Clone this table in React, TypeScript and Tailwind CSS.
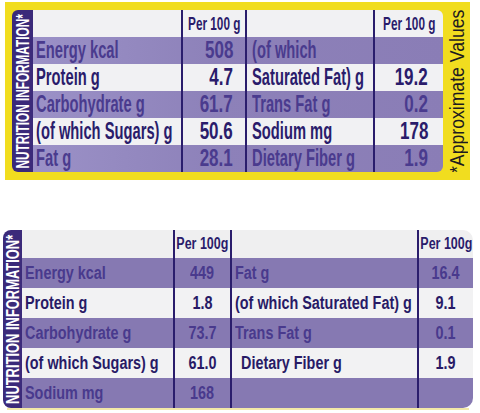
import React from "react";

const NB = "font-['Liberation_Sans',Arial,sans-serif] font-bold";

const topRows = [
  { l1: "Energy kcal", v1: "508", l2: "(of which", v2: "", p: true },
  { l1: "Protein g", v1: "4.7", l2: "Saturated Fat) g", v2: "19.2", p: false },
  { l1: "Carbohydrate g", v1: "61.7", l2: "Trans Fat g", v2: "0.2", p: true },
  { l1: "(of which Sugars) g", v1: "50.6", l2: "Sodium mg", v2: "178", p: false },
  { l1: "Fat g", v1: "28.1", l2: "Dietary Fiber g", v2: "1.9", p: true },
];

const botRows = [
  { l1: "Energy kcal", v1: "449", l2: "Fat g", v2: "16.4", p: true, ind: false },
  { l1: "Protein g", v1: "1.8", l2: "(of which Saturated Fat) g", v2: "9.1", p: false, ind: false },
  { l1: "Carbohydrate g", v1: "73.7", l2: "Trans Fat g", v2: "0.1", p: true, ind: false },
  { l1: "(of which Sugars) g", v1: "61.0", l2: "Dietary Fiber g", v2: "1.9", p: false, ind: true },
  { l1: "Sodium mg", v1: "168", l2: "", v2: "", p: true, ind: false },
];

function TopPanel() {
  return (
    <div className="ml-[5px] mt-[2px] flex h-[178px] w-[465px] bg-[#f1dd1f] pl-[7px] pt-[8px]">
      <div className="flex h-[162px] w-[431px] overflow-hidden rounded-r-[6px]">
        <div className="flex w-[21px] items-center justify-center overflow-hidden rounded-l-[6px] bg-[#3b2a7a]">
          <span className={`${NB} whitespace-nowrap text-[19px] leading-none text-white [writing-mode:vertical-rl] rotate-180 scale-y-[0.62]`}>
            NUTRITION INFORMATION*
          </span>
        </div>
        <div className={`${NB} flex w-[410px] flex-col`}>
          <div className="grid h-[27px] grid-cols-[150px_64px_128px_68px] bg-[#f1f1f3] text-[#2a1c6b]">
            <div className="border-r-2 border-[#2a1d6c]" />
            <div className="flex items-center justify-center border-r-2 border-[#2a1d6c]">
              <span className="inline-block scale-x-[0.62] whitespace-nowrap text-[19px] leading-none">Per 100 g</span>
            </div>
            <div className="border-r-2 border-[#2a1d6c]" />
            <div className="flex items-center justify-center">
              <span className="inline-block scale-x-[0.62] whitespace-nowrap text-[19px] leading-none">Per 100 g</span>
            </div>
          </div>
          {topRows.map((r, i) => (
            <div
              key={i}
              className={`grid h-[27px] grid-cols-[150px_64px_128px_68px] text-[23px] leading-none ${
                r.p
                  ? "bg-[linear-gradient(90deg,#9b91c7,#8d81b9_45%,#8a7db6)] text-[#4a3b8e]"
                  : "bg-[#f1f1f3] text-[#2a1c6b]"
              }`}
            >
              <div className="flex items-center border-r-2 border-[#2a1d6c] pl-[3px]">
                <span className="inline-block origin-left scale-x-[0.64] whitespace-nowrap">{r.l1}</span>
              </div>
              <div className="flex items-center justify-end border-r-2 border-[#2a1d6c] pr-[12px]">
                <span className="inline-block origin-right scale-x-[0.74] whitespace-nowrap">{r.v1}</span>
              </div>
              <div className="flex items-center border-r-2 border-[#2a1d6c] pl-[5px]">
                <span className="inline-block origin-left scale-x-[0.64] whitespace-nowrap">{r.l2}</span>
              </div>
              <div className="flex items-center justify-end pr-[15px]">
                <span className="inline-block origin-right scale-x-[0.74] whitespace-nowrap">{r.v2}</span>
              </div>
            </div>
          ))}
        </div>
      </div>
      <div className="flex h-[162px] w-[27px] items-center justify-center overflow-hidden">
        <span className="whitespace-nowrap font-['Liberation_Sans',Arial,sans-serif] text-[21px] leading-none text-[#1d1a1f] [writing-mode:vertical-rl] rotate-180 scale-y-[0.84]">
          *Approximate Values
        </span>
      </div>
    </div>
  );
}

function BottomPanel() {
  return (
    <div className="ml-[3px] mt-[50px] w-[470px]">
      <div className="flex h-[178px] w-[470px]">
        <div className="flex w-[19px] items-center justify-center overflow-hidden rounded-l-[8px] bg-[#3b2a7a]">
          <span className={`${NB} whitespace-nowrap text-[19px] leading-none text-white [writing-mode:vertical-rl] rotate-180 scale-y-[0.68]`}>
            NUTRITION INFORMATION*
          </span>
        </div>
        <div className={`${NB} flex w-[451px] flex-col overflow-hidden rounded-r-[10px] text-[18px] leading-none`}>
          <div className="grid h-[28px] grid-cols-[153px_57px_187px_54px] bg-[#efeff0] text-[#2a1c6b]">
            <div className="border-r-2 border-[#2a1d6c]" />
            <div className="flex items-center justify-center border-r-2 border-[#2a1d6c]">
              <span className="inline-block scale-x-[0.78] whitespace-nowrap text-[16px]">Per 100g</span>
            </div>
            <div className="border-r-2 border-[#2a1d6c]" />
            <div className="flex items-center justify-center">
              <span className="inline-block scale-x-[0.78] whitespace-nowrap text-[16px]">Per 100g</span>
            </div>
          </div>
          {botRows.map((r, i) => (
            <div
              key={i}
              className={`grid h-[30px] grid-cols-[153px_57px_187px_54px] ${
                r.p ? "bg-[#8679b2] text-[#493a8d]" : "bg-[#f2f2f3] text-[#281a66]"
              }`}
            >
              <div className="flex items-center border-r-2 border-[#2a1d6c] pl-[3px]">
                <span className="inline-block origin-left scale-x-[0.8] whitespace-nowrap">{r.l1}</span>
              </div>
              <div className="flex items-center justify-center border-r-2 border-[#2a1d6c]">
                <span className="inline-block scale-x-[0.8] whitespace-nowrap">{r.v1}</span>
              </div>
              <div className={`flex items-center border-r-2 border-[#2a1d6c] ${r.ind ? "pl-[9px]" : "pl-[3px]"}`}>
                <span className="inline-block origin-left scale-x-[0.8] whitespace-nowrap">{r.l2}</span>
              </div>
              <div className="flex items-center justify-center">
                <span className="inline-block scale-x-[0.8] whitespace-nowrap">{r.v2}</span>
              </div>
            </div>
          ))}
        </div>
      </div>
      <div className="ml-[4px] h-[2px] w-[462px] bg-[#f3e9a8]" />
    </div>
  );
}

export default function App() {
  return (
    <div className="h-[413px] w-[480px] overflow-hidden bg-white">
      <TopPanel />
      <BottomPanel />
    </div>
  );
}
